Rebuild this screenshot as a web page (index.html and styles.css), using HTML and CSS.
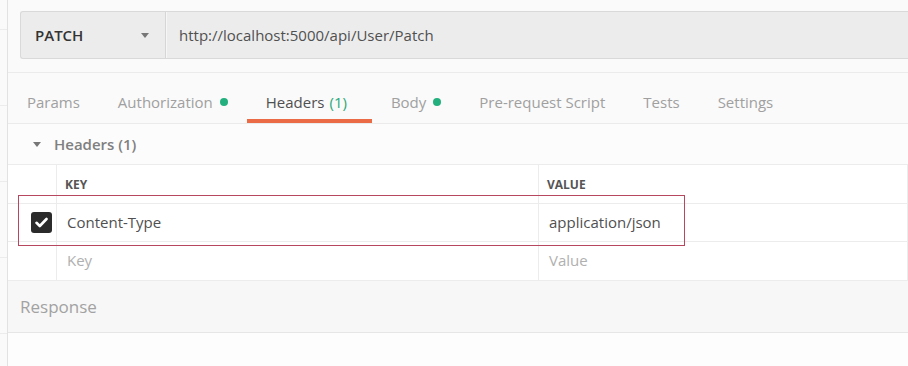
FILE: index.html
```html
<!DOCTYPE html>
<html lang="en">
<head>
  <meta charset="UTF-8">
  <title>PATCH request</title>
  <link rel="stylesheet" href="styles.css">
</head>
<body>
  <div class="app">
    <aside class="sidebar">
      <div class="side-item first"></div>
      <div class="side-item"></div>
      <div class="side-item"></div>
      <div class="side-item"></div>
      <div class="side-item"></div>
    </aside>
    <main class="request">
      <div class="url-bar">
        <div class="url-box">
          <div class="method">PATCH <span class="caret"></span></div>
          <div class="url">http://localhost:5000/api/User/Patch</div>
        </div>
      </div>

      <nav class="tabs">
        <span class="tab">Params</span>
        <span class="tab">Authorization <i class="dot"></i></span>
        <span class="tab active">Headers <em class="count">(1)</em></span>
        <span class="tab">Body <i class="dot"></i></span>
        <span class="tab">Pre-request Script</span>
        <span class="tab">Tests</span>
        <span class="tab">Settings</span>
      </nav>

      <section class="headers">
        <div class="section-title"><span class="caret"></span>Headers (1)</div>
        <div class="kv">
          <div class="cell check head"></div>
          <div class="cell head">KEY</div>
          <div class="cell head">VALUE</div>

          <div class="cell check"><span class="box">
            <svg width="13" height="11" viewBox="0 0 13 11"><path d="M1.5 5.8 L4.8 9 L11.5 2" fill="none" stroke="#fff" stroke-width="2.6" stroke-linecap="round" stroke-linejoin="round"/></svg>
          </span></div>
          <div class="cell val">Content-Type</div>
          <div class="cell val">application/json</div>

          <div class="cell check"></div>
          <div class="cell val placeholder">Key</div>
          <div class="cell val placeholder">Value</div>
        </div>
      </section>

      <div class="response">Response</div>

      <div class="highlight"></div>
    </main>
  </div>
</body>
</html>
```

FILE: styles.css
```css
html, body {
  margin: 0;
  padding: 0;
  height: 100%;
  overflow: hidden;
}
body {
  background-color: #fdfdfd;
  font-family: "Open Sans", "Noto Sans", sans-serif;
  color: #505050;
}
.app {
  display: flex;
  height: 100%;
}
.sidebar {
  width: 7px;
  flex-shrink: 0;
  background-color: #fafafa;
  border-right: 1px solid #e2e2e2;
}
.side-item {
  height: 75px;
  border-bottom: 1px solid #ececec;
}
.side-item.first {
  height: 29px;
}
.request {
  flex: 1;
  position: relative;
  overflow: hidden;
}
.url-bar {
  background-color: #fafafa;
  padding: 11px 0 13px 12px;
  border-bottom: 1px solid #ebebeb;
}
.url-box {
  display: flex;
  height: 46px;
  border: 1px solid #d9d9d9;
  border-right: none;
  border-radius: 3px 0 0 3px;
  background-color: #ececec;
}
.method {
  width: 130px;
  padding-left: 14px;
  display: flex;
  align-items: center;
  justify-content: space-between;
  font-size: 15px;
  font-weight: 600;
  color: #333;
  border-right: 1px solid #d6d6d6;
  box-shadow: 1px 0 0 #f6f6f6;
}
.method .caret {
  margin-right: 16px;
}
.caret {
  display: inline-block;
  width: 0;
  height: 0;
  border-left: 4px solid transparent;
  border-right: 4px solid transparent;
  border-top: 5px solid #777;
}
.url {
  display: flex;
  align-items: center;
  padding-left: 13px;
  font-size: 15px;
  color: #505050;
}
.tabs {
  display: flex;
  height: 50px;
  background-color: #fafafa;
  border-bottom: 1px solid #ebebeb;
}
.tab {
  position: relative;
  display: flex;
  align-items: center;
  padding: 7px 19px 0;
  font-size: 15px;
  color: #a0a0a0;
}
.tab.active {
  color: #505050;
  padding-right: 25px;
}
.tab.active::after {
  content: "";
  position: absolute;
  left: 0;
  right: 0;
  bottom: 0;
  height: 4px;
  background-color: #ec6b47;
}
.count {
  font-style: normal;
  color: #2aa878;
  margin-left: 5px;
}
.dot {
  display: inline-block;
  width: 8px;
  height: 8px;
  border-radius: 50%;
  background-color: #23b07e;
  margin-left: 7px;
}
.headers {
  background-color: #fff;
}
.section-title {
  display: flex;
  align-items: center;
  height: 40px;
  padding-left: 25px;
  font-size: 15px;
  font-weight: 600;
  color: #808080;
  border-bottom: 1px solid #ececec;
  background-color: #fcfcfc;
}
.section-title .caret {
  margin-right: 13px;
}
.kv {
  display: grid;
  grid-template-columns: 49px 482px 1fr;
  grid-template-rows: 39px 38px 39px;
}
.cell {
  display: flex;
  align-items: center;
  border-bottom: 1px solid #ececec;
  border-right: 1px solid #ececec;
  padding-left: 8px;
}
.cell.check {
  padding-left: 23px;
}
.cell.head {
  font-size: 12px;
  font-weight: 700;
  color: #555;
}
.cell.val {
  padding-left: 10px;
  padding-bottom: 2px;
  font-size: 15px;
  color: #505050;
}
.cell.placeholder {
  color: #b0b0b0;
}
.box {
  display: flex;
  align-items: center;
  justify-content: center;
  width: 21px;
  height: 21px;
  border-radius: 3px;
  background-color: #2b2b2b;
}
.response {
  display: flex;
  align-items: center;
  height: 51px;
  padding-left: 12px;
  font-size: 17px;
  color: #a2a2a2;
  background-color: #f7f7f7;
  border-bottom: 1px solid #e6e6e6;
}
.highlight {
  position: absolute;
  left: 10px;
  top: 195px;
  width: 665px;
  height: 49px;
  border: 1px solid #b7475f;
  pointer-events: none;
}
```
